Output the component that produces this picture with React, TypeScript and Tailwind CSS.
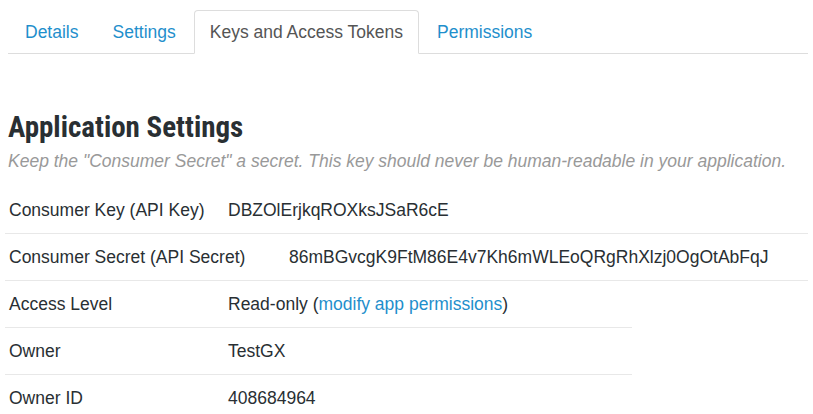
import React from 'react';

const tabs = [
  { label: 'Details', active: false },
  { label: 'Settings', active: false },
  { label: 'Keys and Access Tokens', active: true },
  { label: 'Permissions', active: false },
];

const keyRows = [
  { label: 'Consumer Key (API Key)', value: 'DBZOlErjkqROXksJSaR6cE', labelW: 'w-[223px]' },
  { label: 'Consumer Secret (API Secret)', value: '86mBGvcgK9FtM86E4v7Kh6mWLEoQRgRhXlzj0OgOtAbFqJ', labelW: 'w-[284px]' },
];

export default function App() {
  return (
    <div
      className="w-[813px] h-[414px] overflow-hidden bg-white text-[17.5px] text-[#292f33]"
      style={{ fontFamily: '"Liberation Sans", Arial, sans-serif' }}
    >
      {/* Tabs */}
      <ul className="mt-[10px] ml-[8px] w-[800px] flex gap-[2px] pl-[1px] border-b border-[#dddddd]">
        {tabs.map((tab) => (
          <li key={tab.label} className="-mb-px">
            <a
              className={
                tab.active
                  ? 'block px-[15px] py-[10px] leading-[22px] border border-[#dddddd] border-b-white bg-white rounded-t-[4px] text-[#555555]'
                  : 'block px-[15px] py-[10px] leading-[22px] border border-transparent text-[#1f8fcc]'
              }
            >
              {tab.label}
            </a>
          </li>
        ))}
      </ul>

      {/* Heading */}
      <div className="px-[8px]">
        <h2
          className="mt-[56px] text-[29px] leading-[34px] font-bold text-[#292f33]"
          style={{ fontFamily: '"Liberation Sans Narrow", "Roboto Condensed", Roboto, sans-serif' }}
        >
          Application Settings
        </h2>
        <p className="mt-[6px] italic text-[#999999] leading-[22px]">
          Keep the "Consumer Secret" a secret. This key should never be human-readable in your application.
        </p>
      </div>

      {/* Keys */}
      <div className="ml-[5px] mt-[15px] w-[803px]">
        {keyRows.map((row) => (
          <div key={row.label} className="flex items-center h-[47px] border-b border-[#e8e8e8]">
            <div className={`${row.labelW} pl-[4px] shrink-0`}>{row.label}</div>
            <div>{row.value}</div>
          </div>
        ))}
      </div>

      {/* Details */}
      <div className="ml-[5px] w-[627px]">
        <div className="flex items-center h-[47px] border-b border-[#e8e8e8]">
          <div className="w-[223px] pl-[4px] shrink-0">Access Level</div>
          <div>
            Read-only (<a className="text-[#1f8fcc]">modify app permissions</a>)
          </div>
        </div>
        <div className="flex items-center h-[47px] border-b border-[#e8e8e8]">
          <div className="w-[223px] pl-[4px] shrink-0">Owner</div>
          <div>TestGX</div>
        </div>
        <div className="flex items-center h-[47px] border-b border-[#e8e8e8]">
          <div className="w-[223px] pl-[4px] shrink-0">Owner ID</div>
          <div>408684964</div>
        </div>
      </div>
    </div>
  );
}
